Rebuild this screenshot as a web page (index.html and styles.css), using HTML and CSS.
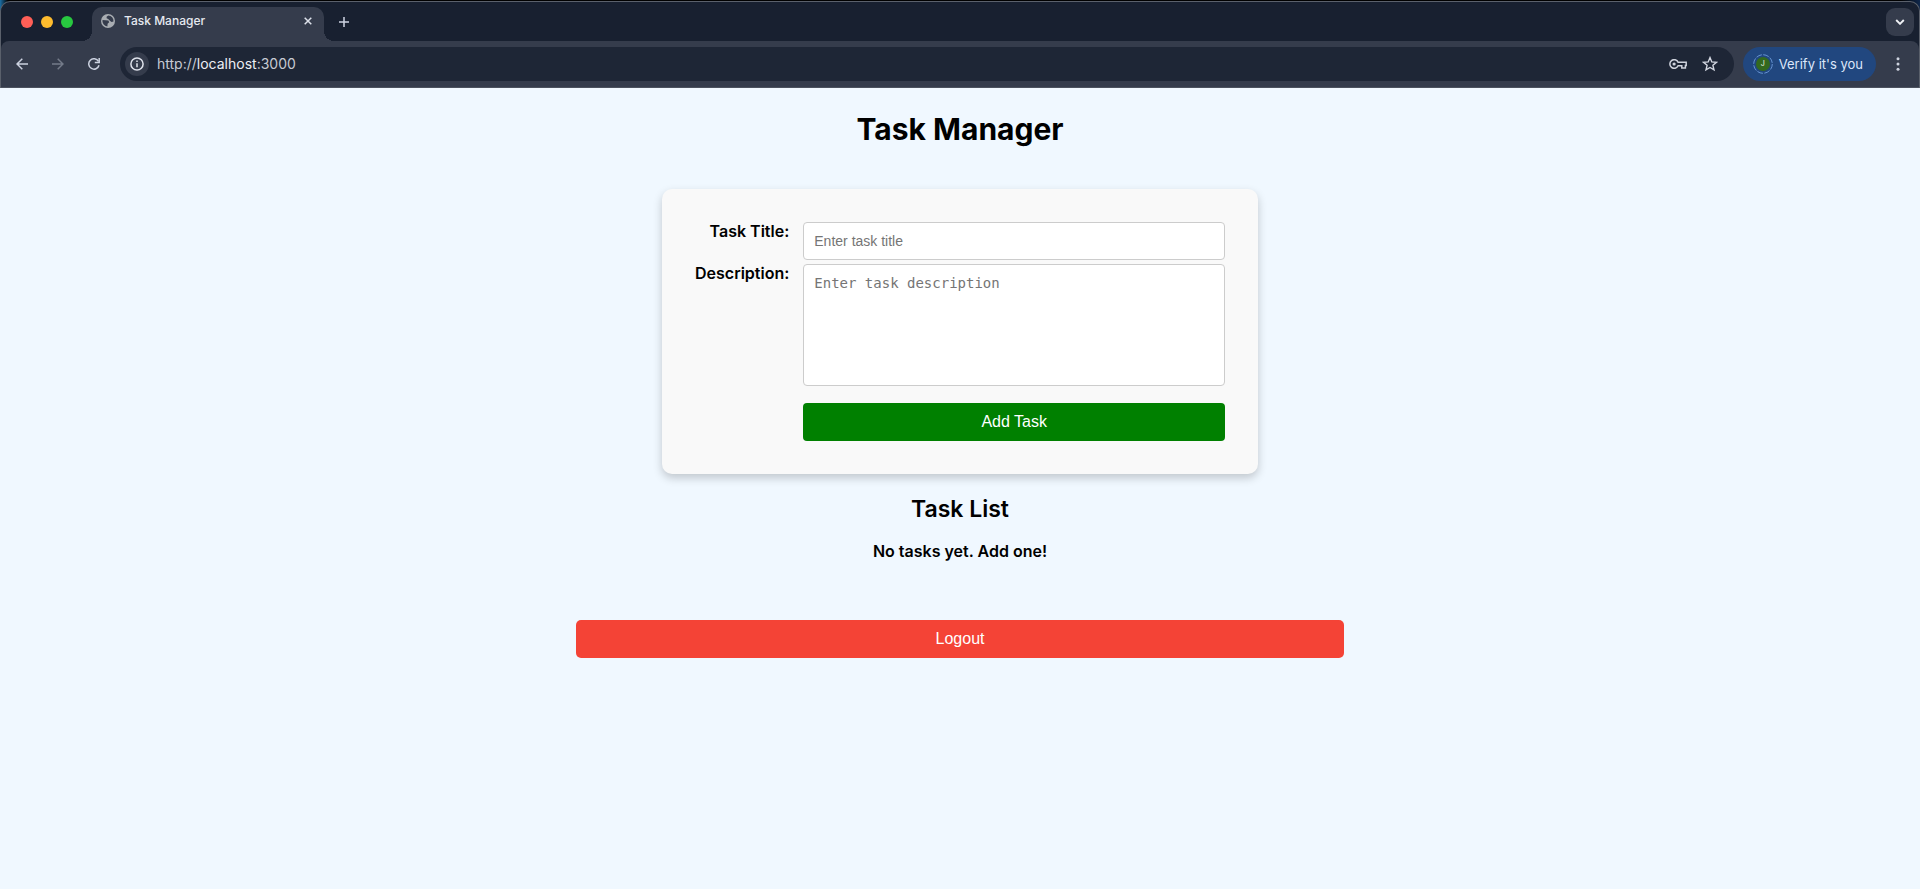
FILE: index.html
```html
<!DOCTYPE html>
<html lang="en">
<head>
<meta charset="utf-8">
<title>Task Manager</title>
<link rel="stylesheet" href="styles.css">
</head>
<body>
<header class="browser">
  <div class="window">
    <div class="tabstrip">
      <div class="lights"><span class="light red"></span><span class="light yellow"></span><span class="light green"></span></div>
      <div class="tab">
        <svg class="globe" viewBox="0 0 14 14" width="14" height="14"><circle cx="7" cy="7" r="7" fill="#a9adb2"/><path d="M1.5 6 4.6 6.3 7.4 6.6 8.2 8.2 6.6 9.8 6.4 12.5A5.5 5.5 0 0 1 1.5 6ZM7.3 1.5 5.6 2.7 5.6 4.3 7.2 5 9.2 6.9 10.6 8 12.5 7.4A5.5 5.5 0 0 0 7.3 1.5Z" fill="#353c4c"/></svg>
        <span class="tab-title">Task Manager</span>
        <button class="icon-btn" type="button" aria-label="Close tab"><svg viewBox="0 0 8 8" width="8" height="8"><path d="M.7.7l6.6 6.6M7.3.7.7 7.3" stroke="#dde1ea" stroke-width="1.5"/></svg></button>
      </div>
      <button class="icon-btn" type="button" aria-label="New tab"><svg viewBox="0 0 10 10" width="10" height="10"><path d="M5 0v10M0 5h10" stroke="#ced4e2" stroke-width="1.5"/></svg></button>
      <button class="search-tabs" type="button" aria-label="Search tabs"><svg viewBox="0 0 10 6" width="10" height="6"><path d="M1.2 1 5 4.8 8.8 1" fill="none" stroke="#f0f2f6" stroke-width="1.9"/></svg></button>
    </div>
    <div class="toolbar">
      <nav class="nav">
        <button class="icon-btn" type="button" aria-label="Back"><svg viewBox="0 0 12 12" width="12" height="12"><path d="M12 6H1M6.3.7 1 6l5.3 5.3" fill="none" stroke="#ccd2e0" stroke-width="1.5"/></svg></button>
        <button class="icon-btn" type="button" aria-label="Forward"><svg viewBox="0 0 12 12" width="12" height="12"><path d="M0 6h11M5.7.7 11 6l-5.3 5.3" fill="none" stroke="#747b89" stroke-width="1.5"/></svg></button>
        <button class="icon-btn" type="button" aria-label="Reload"><svg viewBox="0 0 12 12" width="12" height="12"><path d="M10.5 3.4A5.2 5.2 0 1 0 11 7.2" fill="none" stroke="#ccd2e0" stroke-width="1.5"/><path d="M11.2 0v4.6H6.8" fill="none" stroke="#ccd2e0" stroke-width="1.5"/></svg></button>
      </nav>
      <div class="omnibox">
        <button class="site-info" type="button" aria-label="Site information"><svg viewBox="0 0 14 14" width="14" height="14"><circle cx="7" cy="7" r="6.1" fill="none" stroke="#dfe3ec" stroke-width="1.5"/><path d="M7 6.2v4M7 3.6v1.5" stroke="#dfe3ec" stroke-width="1.5"/></svg></button>
        <a class="url" href="#">http://<span class="host">localhost</span>:3000</a>
        <button class="icon-btn" type="button" aria-label="Passwords"><svg viewBox="0 0 18 10" width="18" height="10"><path d="M9.1 3.3H17.2V6.6H16.4V9H12.8V6.7H9.1A4.3 4.3 0 1 1 9.1 3.3Z" fill="none" stroke="#ced2dc" stroke-width="1.5"/><circle cx="5.1" cy="5" r="1.6" fill="#ced2dc"/></svg></button>
        <button class="icon-btn" type="button" aria-label="Bookmark this page"><svg viewBox="0 0 16 16" width="16" height="16"><path d="m8 1.6 1.8 4.3 4.7.4-3.6 3 1.1 4.6L8 11.5l-4 2.4 1.1-4.6-3.6-3 4.7-.4Z" fill="none" stroke="#d3d7e1" stroke-width="1.4"/></svg></button>
      </div>
      <button class="verify" type="button"><span class="avatar"><svg class="ring" viewBox="0 0 20 20" width="20" height="20"><circle cx="10" cy="10" r="9.3" fill="none" stroke="#6593d2" stroke-width="1" stroke-dasharray="5.8 1.5"/><circle cx="10" cy="10" r="7" fill="#33691e"/></svg><span class="initial">J</span></span>Verify it's you</button>
      <button class="icon-btn" type="button" aria-label="Menu"><svg viewBox="0 0 4 14" width="4" height="14"><g fill="#ced3df"><circle cx="2" cy="1.7" r="1.5"/><circle cx="2" cy="7" r="1.5"/><circle cx="2" cy="12.3" r="1.5"/></g></svg></button>
    </div>
  </div>
</header>
<main class="page">
  <h1 class="title">Task Manager</h1>
  <form class="card">
    <label class="label" for="task-title">Task Title:</label>
    <input class="field" id="task-title" type="text" placeholder="Enter task title">
    <label class="label" for="task-desc">Description:</label>
    <textarea class="field area" id="task-desc" placeholder="Enter task description"></textarea>
    <button class="btn add" type="button">Add Task</button>
  </form>
  <h2 class="subtitle">Task List</h2>
  <p class="empty">No tasks yet. Add one!</p>
  <button class="btn logout" type="button">Logout</button>
</main>
</body>
</html>
```

FILE: styles.css
```css
* { box-sizing: border-box; }

body {
  margin: 0;
  background: #f0f8ff;
  color: #000;
  font-family: Inter, "Liberation Sans", sans-serif;
}

button { font-family: inherit; border: 0; padding: 0; cursor: pointer; }

/* Browser window frame */
.browser {
  padding-top: 1px;
  background: linear-gradient(90deg, #1c6ea5 0, #000 8px, #000 99%, #10284c 100%);
}

.window {
  background: #182030;
  border: 1px solid #5a606b;
  border-bottom: 0;
  border-radius: 10px 10px 0 0;
}

.tabstrip {
  display: flex;
  align-items: center;
  height: 39px;
  padding: 0 5px 0 20px;
}

.lights { display: flex; gap: 8px; width: 71px; }
.light { width: 12px; height: 12px; border-radius: 50%; }
.red { background: #ff5f57; }
.yellow { background: #febc2e; }
.green { background: #28c840; }

.tab {
  position: relative;
  display: flex;
  align-items: center;
  align-self: flex-end;
  width: 232px;
  height: 34px;
  padding: 0 8px 6px 9px;
  background: #353c4c;
  border-radius: 10px 10px 0 0;
}

.tab::before,
.tab::after {
  content: "";
  position: absolute;
  bottom: 0;
  width: 10px;
  height: 10px;
}
.tab::before { left: -10px; background: radial-gradient(circle at 0 0, #182030 10px, #353c4c 10px); }
.tab::after { right: -10px; background: radial-gradient(circle at 100% 0, #182030 10px, #353c4c 10px); }

.tab-title { flex: 1; margin-left: 9px; color: #e6e9f0; font-size: 12px; line-height: 14px; font-weight: 500; }

.icon-btn {
  display: flex;
  align-items: center;
  justify-content: center;
  width: 16px;
  height: 28px;
  background: none;
}
.tab + .icon-btn { margin-left: 12px; }

.search-tabs {
  display: flex;
  align-items: center;
  justify-content: center;
  width: 28px;
  height: 28px;
  margin-left: auto;
  background: #353c4c;
  border-radius: 9px;
}

.toolbar {
  display: flex;
  align-items: center;
  height: 47px;
  padding: 0 13px;
  background: #353c4c;
  border-bottom: 1px solid #4c525f;
  border-radius: 8px 8px 0 0;
}

.nav { display: flex; gap: 20px; margin-right: 18px; }

.omnibox {
  flex: 1;
  display: flex;
  align-items: center;
  height: 34px;
  padding: 0 16px 0 5px;
  background: #1e2636;
  border-radius: 17px;
}

.site-info {
  display: flex;
  align-items: center;
  justify-content: center;
  width: 24px;
  height: 24px;
  margin-right: 8px;
  background: #353c4c;
  border-radius: 50%;
}

.url { flex: 1; color: #c7cad3; font-size: 14px; line-height: 16px; text-decoration: none; }
.host { color: #eceef4; }
.url + .icon-btn { width: 18px; margin-right: 15px; }

.verify {
  display: flex;
  align-items: center;
  gap: 6px;
  height: 34px;
  margin: 0 14px 0 9px;
  padding: 0 13px 0 10px;
  background: #21477f;
  border-radius: 17px;
  color: #dce6fa;
  font-size: 13px;
  font-weight: 400;
}

.avatar { display: grid; place-items: center; }
.ring, .initial { grid-area: 1 / 1; }
.initial { color: #e8f0e0; font-size: 7px; line-height: 8px; }

/* Task page */
.page {
  display: flex;
  flex-direction: column;
  align-items: center;
  padding-bottom: 32px;
}

.title { margin: 21px 0 40px; font-size: 30px; line-height: 40px; font-weight: 700; }

.card {
  display: grid;
  grid-template-columns: auto 1fr;
  column-gap: 14px;
  row-gap: 4px;
  width: 596px;
  max-width: 100%;
  padding: 33px;
  background: #f9f9f9;
  border-radius: 10px;
  box-shadow: 0 4px 10px rgba(0, 0, 0, 0.2);
}

.label { font-size: 16px; line-height: 19px; font-weight: 600; text-align: right; }

.field {
  width: 100%;
  height: 38px;
  padding: 10px;
  border: 1px solid #ccc;
  border-radius: 4px;
  background: #fff;
  font-family: "Liberation Sans", Arial, sans-serif;
  font-size: 14px;
}
.area {
  height: 122px;
  resize: none;
  font-family: "DejaVu Sans Mono", monospace;
}
.field::placeholder { color: #757575; }

.btn {
  height: 38px;
  color: #fff;
  border-radius: 4px;
  font-family: "Liberation Sans", Arial, sans-serif;
  font-size: 16px;
}
.add { grid-column: 2; margin-top: 13px; background: #008000; }

.subtitle { margin: 20px 0 17px; font-size: 23px; line-height: 30px; font-weight: 600; }
.empty { margin: 0 0 59px; font-size: 16px; line-height: 20px; font-weight: 600; }
.logout { width: 40%; background: #f44336; border-radius: 5px; }
```
